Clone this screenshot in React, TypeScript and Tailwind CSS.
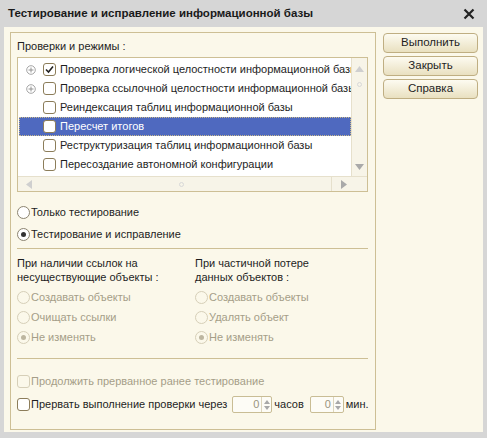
import React from "react";

const font = { fontFamily: '"Liberation Sans", Arial, sans-serif' };

function Check({ checked = false, disabled = false }: { checked?: boolean; disabled?: boolean }) {
  return (
    <span
      className={`w-[13px] h-[13px] shrink-0 rounded-[3px] border flex items-center justify-center ${
        disabled ? "border-[#d6cfb8] bg-[#fbf8ea]" : "border-[#8c7d5a] bg-white"
      }`}
    >
      {checked && (
        <svg width="9" height="9" viewBox="0 0 9 9">
          <path d="M1 4.5 L3.5 7 L8 1.5" stroke="#222" strokeWidth="1.6" fill="none" />
        </svg>
      )}
    </span>
  );
}

function Radio({ checked = false, disabled = false }: { checked?: boolean; disabled?: boolean }) {
  return (
    <span
      className={`w-[13px] h-[13px] shrink-0 rounded-full border flex items-center justify-center ${
        disabled ? "border-[#d6cfb8] bg-[#fbf8ea]" : "border-[#8c8470] bg-white"
      }`}
    >
      {checked && (
        <span className={`w-[5px] h-[5px] rounded-full ${disabled ? "bg-[#bdb6a0]" : "bg-[#333]"}`} />
      )}
    </span>
  );
}

function Plus() {
  return (
    <svg width="10" height="10" viewBox="0 0 10 10" className="shrink-0">
      <circle cx="5" cy="5" r="4.3" fill="none" stroke="#9a9a9a" strokeWidth="0.9" />
      <path d="M2.5 5 H7.5 M5 2.5 V7.5" stroke="#8a8a8a" strokeWidth="0.9" />
    </svg>
  );
}

function Spin({ w }: { w: string }) {
  return (
    <span className={`${w} h-[17px] border border-[#c9bd95] rounded-[2px] bg-[#fdfcf6] flex items-stretch`}>
      <span className="flex-1 text-right pr-[2px] text-[#9a9480] leading-[15px]">0</span>
      <span className="w-[10px] border-l border-[#ddd6bd] flex flex-col items-center justify-center gap-[2px]">
        <svg width="6" height="4" viewBox="0 0 6 4"><path d="M0 4 L3 0 L6 4Z" fill="#a8a8a8" /></svg>
        <svg width="6" height="4" viewBox="0 0 6 4"><path d="M0 0 L3 4 L6 0Z" fill="#a8a8a8" /></svg>
      </span>
    </span>
  );
}

function Btn({ children }: { children: React.ReactNode }) {
  return (
    <div className="h-[20px] rounded-[4px] border border-[#bfae82] bg-gradient-to-b from-[#fdfbf1] to-[#e9e0c0] flex items-center justify-center text-[11.5px] text-[#1e1e1e]">
      {children}
    </div>
  );
}

const rows = [
  { plus: true, checked: true, text: "Проверка логической целостности информационной базы" },
  { plus: true, checked: false, text: "Проверка ссылочной целостности информационной базы" },
  { plus: false, checked: false, text: "Реиндексация таблиц информационной базы" },
  { plus: false, checked: false, text: "Пересчет итогов", sel: true },
  { plus: false, checked: false, text: "Реструктуризация таблиц информационной базы" },
  { plus: false, checked: false, text: "Пересоздание автономной конфигурации" },
];

export default function App() {
  return (
    <div style={font} className="w-[487px] h-[438px] bg-[#d6d6d6] flex flex-col text-[11px] text-[#1e1e1e]">
      <div className="h-[27px] flex items-center justify-between pl-[8px] pr-[12px]">
        <span className="font-bold text-[11.5px] text-[#1a1a1a]">Тестирование и исправление информационной базы</span>
        <svg width="12" height="12" viewBox="0 0 12 12">
          <path d="M1.5 1.5 L10.5 10.5 M10.5 1.5 L1.5 10.5" stroke="#222" strokeWidth="2.2" />
        </svg>
      </div>
      <div className="flex-1 mx-[4px] mb-[6px] bg-[#fbf8ea] flex pl-[6px] pr-[4px] pt-[5px] pb-[2px] gap-[7px]">
        <div className="w-[366px] border border-[#cdbf95] pl-[6px] pr-[7px] pt-[6px] flex flex-col">
          <div className="h-[15px] leading-[15px]">Проверки и режимы :</div>
          <div className="mt-[3px] h-[135px] border border-[#cdbf95] bg-white flex flex-col">
            <div className="flex flex-1 min-h-0">
              <div className="flex-1 min-w-0 pt-[2px] pl-[1px] overflow-hidden">
                {rows.map((r, i) => (
                  <div
                    key={i}
                    className={`h-[19px] flex items-center whitespace-nowrap ${
                      r.sel ? "bg-[#4f69bf] text-white outline outline-1 outline-dotted outline-[#c9b98a] -outline-offset-1" : ""
                    }`}
                  >
                    <span className="w-[24px] shrink-0 flex justify-center">{r.plus && <Plus />}</span>
                    <Check checked={r.checked} />
                    <span className="ml-[4px] shrink-0">{r.text}</span>
                  </div>
                ))}
              </div>
              <div className="w-[16px] shrink-0 border-l border-[#e6e0cc] bg-[#f7f4e8] flex flex-col items-center">
                <svg width="9" height="6" viewBox="0 0 9 6" className="mt-[8px]"><path d="M0 6 L4.5 0 L9 6Z" fill="#cfcfcf" /></svg>
                <span className="mt-[10px] w-[5px] h-[5px] rounded-full border border-[#d8d8d8]" />
                <span className="flex-1" />
                <svg width="9" height="6" viewBox="0 0 9 6" className="mb-[6px]"><path d="M0 0 L4.5 6 L9 0Z" fill="#a9a9a9" /></svg>
              </div>
            </div>
            <div className="h-[15px] border-t border-[#e6e0cc] bg-[#f7f4e8] flex items-center">
              <svg width="6" height="9" viewBox="0 0 6 9" className="ml-[8px]"><path d="M6 0 L0 4.5 L6 9Z" fill="#cfcfcf" /></svg>
              <span className="flex-1 flex justify-center">
                <span className="w-[5px] h-[5px] rounded-full border border-[#d8d8d8]" />
              </span>
              <span className="w-px h-full bg-[#e6e0cc] mr-[9px]" />
              <svg width="6" height="9" viewBox="0 0 6 9" className="mr-[20px]"><path d="M0 0 L6 4.5 L0 9Z" fill="#a9a9a9" /></svg>
            </div>
          </div>

          <div className="mt-[13px] flex flex-col gap-[7px]">
            <label className="h-[15px] flex items-center gap-[1px]"><Radio /><span>Только тестирование</span></label>
            <label className="h-[15px] flex items-center gap-[1px]"><Radio checked /><span>Тестирование и исправление</span></label>
          </div>
          <div className="mt-[6px] h-px bg-[#cdbf95]" />

          <div className="mt-[7px] flex">
            <div className="w-[178px] flex flex-col">
              <div className="leading-[14px]">При наличии ссылок на<br />несуществующие объекты :</div>
              <div className="mt-[6px] flex flex-col gap-[5px] text-[#a59e88]">
                <label className="h-[15px] flex items-center gap-[1px]"><Radio disabled /><span>Создавать объекты</span></label>
                <label className="h-[15px] flex items-center gap-[1px]"><Radio disabled /><span>Очищать ссылки</span></label>
                <label className="h-[15px] flex items-center gap-[1px]"><Radio disabled checked /><span>Не изменять</span></label>
              </div>
            </div>
            <div className="flex-1 flex flex-col">
              <div className="leading-[14px]">При частичной потере<br />данных объектов :</div>
              <div className="mt-[6px] flex flex-col gap-[5px] text-[#a59e88]">
                <label className="h-[15px] flex items-center gap-[1px]"><Radio disabled /><span>Создавать объекты</span></label>
                <label className="h-[15px] flex items-center gap-[1px]"><Radio disabled /><span>Удалять объект</span></label>
                <label className="h-[15px] flex items-center gap-[1px]"><Radio disabled checked /><span>Не изменять</span></label>
              </div>
            </div>
          </div>
          <div className="mt-[13px] h-px bg-[#cdbf95]" />

          <label className="mt-[15px] h-[15px] flex items-center gap-[1px] text-[#a59e88] whitespace-nowrap">
            <Check disabled /><span>Продолжить прерванное ранее тестирование</span>
          </label>
          <div className="mt-[7px] h-[17px] flex items-center whitespace-nowrap">
            <Check />
            <span className="ml-[1px]">Прервать выполнение проверки через</span>
            <span className="ml-[5px]"><Spin w="w-[40px]" /></span>
            <span className="ml-[2px]">часов</span>
            <span className="ml-[6px]"><Spin w="w-[34px]" /></span>
            <span className="ml-[2px]">мин.</span>
          </div>
        </div>
        <div className="w-[95px] flex flex-col gap-[3px] pt-[1px]">
          <Btn>Выполнить</Btn>
          <Btn>Закрыть</Btn>
          <Btn>Справка</Btn>
        </div>
      </div>
    </div>
  );
}
